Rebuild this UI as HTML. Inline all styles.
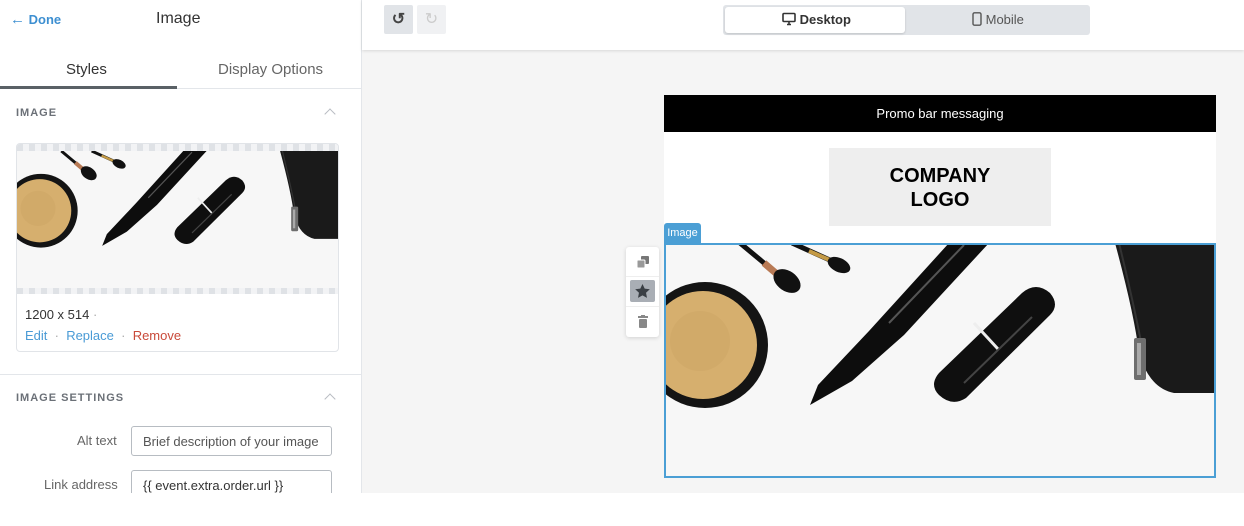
<!DOCTYPE html>
<html><head><meta charset="utf-8"><style>
*{box-sizing:border-box;margin:0;padding:0}
body{width:1244px;height:526px;background:#fff;font-family:"Liberation Sans",sans-serif;position:relative;overflow:hidden}
.abs{position:absolute}
.left{left:0;top:0;width:362px;height:493px;border-right:1px solid #e3e6ea;background:#fff}
.canvas{left:362px;top:50px;width:882px;height:443px;background:#f5f5f5}
.top{left:362px;top:0;width:882px;height:50px;background:#fff;box-shadow:0 1px 3px rgba(0,0,0,.12)}
.lbl{font-size:11px;letter-spacing:1px;color:#6b7077;font-weight:bold}
.chev{width:8px;height:8px;border-left:1.5px solid #b8bcc2;border-top:1.5px solid #b8bcc2;transform:rotate(45deg)}
.inp{border:1px solid #b7bcc2;border-radius:3px;height:30px;font-size:13px;color:#555;padding:7px 11px;background:#fff}
.check{background-image:linear-gradient(90deg,#dfe2e6 50%,#f2f3f5 50%);background-size:12px 100%}
</style></head><body>
<div class="abs left">
  <div class="abs" style="left:10px;top:11px;font-size:13px;color:#3d8fd1;font-weight:bold"><span style="font-size:15px">&#8592;</span> Done</div>
  <div class="abs" style="left:156px;top:10px;font-size:16px;color:#333">Image</div>
  <div class="abs" style="left:66px;top:61px;font-size:15px;color:#333">Styles</div>
  <div class="abs" style="left:218px;top:61px;font-size:15px;color:#666">Display Options</div>
  <div class="abs" style="left:0;top:86px;width:177px;height:3px;background:#5a6166"></div>
  <div class="abs" style="left:177px;top:88px;width:185px;height:1px;background:#e3e6ea"></div>
  <div class="abs lbl" style="left:16px;top:107px">IMAGE</div>
  <div class="abs chev" style="left:326px;top:110px"></div>
  <div class="abs" style="left:16px;top:143px;width:323px;height:209px;border:1px solid #e1e4e8;border-radius:4px;overflow:hidden;background:#fff">
    <div class="abs check" style="left:0;top:0;width:322px;height:7px"></div>
    <div class="abs" style="left:0;top:7px;width:322px;height:137px">
      <svg width="322" height="137" viewBox="0 0 552 234" preserveAspectRatio="none">
<rect width="552" height="234" fill="#f7f7f7"/>
<circle cx="41" cy="102" r="63" fill="#141414"/><circle cx="39" cy="102" r="54" fill="#d6af6e"/><circle cx="36" cy="98" r="30" fill="#c9a060" opacity=".35"/>
<line x1="76" y1="0" x2="112" y2="30" stroke="#111" stroke-width="5"/><line x1="100" y1="20" x2="114" y2="32" stroke="#b87a55" stroke-width="7"/><ellipse cx="123" cy="38" rx="15" ry="10" transform="rotate(35 123 38)" fill="#111"/>
<line x1="128" y1="0" x2="168" y2="18" stroke="#111" stroke-width="5"/><line x1="145" y1="8" x2="168" y2="18" stroke="#c49a45" stroke-width="4"/><ellipse cx="175" cy="22" rx="12" ry="7" transform="rotate(25 175 22)" fill="#111"/>
<path d="M146 162 L154 142 L205 88 L285 0 L325 0 L240 92 L188 138 Z" fill="#0d0d0d"/><path d="M225 80 L300 2" stroke="#555" stroke-width="2"/>
<path d="M275 152 Q265 142 275 130 L358 50 Q372 38 386 50 Q396 62 386 72 L302 155 Q288 164 275 152Z" fill="#0f0f0f"/><line x1="310" y1="80" x2="334" y2="106" stroke="#eee" stroke-width="3"/><path d="M300 140 L368 74" stroke="#444" stroke-width="2"/>
<path d="M451 0 Q470 70 475 110 Q485 145 510 150 L552 150 L552 0Z" fill="#1a1a1a"/><path d="M455 0 Q472 70 480 115" stroke="#333" stroke-width="2" fill="none"/><rect x="470" y="95" width="12" height="42" rx="2" fill="#6e6e6e"/><rect x="473" y="100" width="4" height="32" fill="#aaa"/>
</svg>
    </div>
    <div class="abs check" style="left:0;top:144px;width:322px;height:6px"></div>
    <div class="abs" style="left:8px;top:163px;font-size:13px;color:#333">1200 x 514 <span style="color:#aaa">·</span></div>
    <div class="abs" style="left:8px;top:184px;font-size:13px;color:#4a9bd6">Edit <span style="color:#aaa">&nbsp;·&nbsp;</span> Replace <span style="color:#aaa">&nbsp;·&nbsp;</span> <span style="color:#c94a3a">Remove</span></div>
  </div>
  <div class="abs" style="left:0;top:374px;width:362px;height:1px;background:#e3e6ea"></div>
  <div class="abs lbl" style="left:16px;top:392px">IMAGE SETTINGS</div>
  <div class="abs chev" style="left:326px;top:395px"></div>
  <div class="abs" style="left:77px;top:433px;font-size:13px;color:#666">Alt text</div>
  <div class="abs inp" style="left:131px;top:426px;width:201px">Brief description of your image</div>
  <div class="abs" style="left:44px;top:477px;font-size:13px;color:#666">Link address</div>
  <div class="abs" style="left:131px;top:470px;width:201px;height:23px;overflow:hidden"><div class="inp" style="width:201px;color:#333">{{ event.extra.order.url }}</div></div>
</div>
<div class="abs canvas"></div>
<div class="abs top">
  <div class="abs" style="left:22px;top:5px;width:29px;height:29px;background:#e1e4e8;border-radius:2px;color:#444;font-size:16px;text-align:center;line-height:29px;font-weight:bold">&#8634;</div>
  <div class="abs" style="left:55px;top:5px;width:29px;height:29px;background:#f0f1f3;border-radius:2px;color:#ccc;font-size:16px;text-align:center;line-height:29px">&#8635;</div>
  <div class="abs" style="left:361px;top:5px;width:367px;height:30px;background:#e1e4e8;border-radius:3px"></div>
  <div class="abs" style="left:363px;top:7px;width:180px;height:26px;background:#fff;border-radius:3px;box-shadow:0 1px 2px rgba(0,0,0,.15)"></div>
  <div class="abs" style="left:420px;top:12px;font-size:13px;color:#333;font-weight:bold">
    <svg width="14" height="14" viewBox="0 0 14 14" style="vertical-align:-2px"><rect x="1" y="1.5" width="12" height="8" rx="1" fill="none" stroke="#333" stroke-width="1.6"/><path d="M5 12.5h4M7 10v2.5" stroke="#333" stroke-width="1.6"/></svg> Desktop</div>
  <div class="abs" style="left:610px;top:12px;font-size:13px;color:#555">
    <svg width="10" height="14" viewBox="0 0 10 14" style="vertical-align:-2px"><rect x="1" y="0.8" width="8" height="12.4" rx="1.5" fill="none" stroke="#555" stroke-width="1.4"/></svg> Mobile</div>
</div>
<div class="abs" style="left:664px;top:95px;width:552px;height:37px;background:#000;color:#fff;font-size:13px;text-align:center;line-height:37px">Promo bar messaging</div>
<div class="abs" style="left:664px;top:132px;width:552px;height:112px;background:#fff"></div>
<div class="abs" style="left:829px;top:148px;width:222px;height:78px;background:#eee;text-align:center;font-weight:bold;font-size:20px;line-height:24px;padding-top:16px;color:#000">COMPANY<br>LOGO</div>
<div class="abs" style="left:664px;top:223px;width:37px;height:20px;background:#4b9fd5;border-radius:3px 3px 0 0;color:#fff;font-size:11px;line-height:20px;text-align:center">Image</div>
<div class="abs" style="left:664px;top:243px;width:552px;height:235px;border:2px solid #4b9fd5;overflow:hidden;background:#f7f7f7">
<svg width="548" height="231" viewBox="2 2 548 231" preserveAspectRatio="none">
<rect width="552" height="234" fill="#f7f7f7"/>
<circle cx="41" cy="102" r="63" fill="#141414"/><circle cx="39" cy="102" r="54" fill="#d6af6e"/><circle cx="36" cy="98" r="30" fill="#c9a060" opacity=".35"/>
<line x1="76" y1="0" x2="112" y2="30" stroke="#111" stroke-width="5"/><line x1="100" y1="20" x2="114" y2="32" stroke="#b87a55" stroke-width="7"/><ellipse cx="123" cy="38" rx="15" ry="10" transform="rotate(35 123 38)" fill="#111"/>
<line x1="128" y1="0" x2="168" y2="18" stroke="#111" stroke-width="5"/><line x1="145" y1="8" x2="168" y2="18" stroke="#c49a45" stroke-width="4"/><ellipse cx="175" cy="22" rx="12" ry="7" transform="rotate(25 175 22)" fill="#111"/>
<path d="M146 162 L154 142 L205 88 L285 0 L325 0 L240 92 L188 138 Z" fill="#0d0d0d"/><path d="M225 80 L300 2" stroke="#555" stroke-width="2"/>
<path d="M275 152 Q265 142 275 130 L358 50 Q372 38 386 50 Q396 62 386 72 L302 155 Q288 164 275 152Z" fill="#0f0f0f"/><line x1="310" y1="80" x2="334" y2="106" stroke="#eee" stroke-width="3"/><path d="M300 140 L368 74" stroke="#444" stroke-width="2"/>
<path d="M451 0 Q470 70 475 110 Q485 145 510 150 L552 150 L552 0Z" fill="#1a1a1a"/><path d="M455 0 Q472 70 480 115" stroke="#333" stroke-width="2" fill="none"/><rect x="470" y="95" width="12" height="42" rx="2" fill="#6e6e6e"/><rect x="473" y="100" width="4" height="32" fill="#aaa"/>
</svg></div>
<div class="abs" style="left:626px;top:247px;width:33px;height:90px;background:#fff;border-radius:3px;box-shadow:0 1px 4px rgba(0,0,0,.15)">
  <svg class="abs" style="left:11px;top:9px" width="12" height="12" viewBox="0 0 12 12"><rect x="4" y="0" width="8" height="8" rx="1" fill="#777"/><rect x="0" y="4" width="8" height="8" rx="1" fill="#999" stroke="#fff" stroke-width="1"/></svg>
  <div class="abs" style="left:0;top:29px;width:33px;height:1px;background:#eee"></div>
  <div class="abs" style="left:4px;top:33px;width:25px;height:22px;background:#a9aeb5;border-radius:2px"></div>
  <svg class="abs" style="left:9px;top:37px" width="15" height="14" viewBox="0 0 24 23"><path d="M12 0l3.6 7.6 8.4 1-6.2 5.8 1.6 8.4L12 18.6 4.6 22.8l1.6-8.4L0 8.6l8.4-1z" fill="#3a3f45"/></svg>
  <div class="abs" style="left:0;top:59px;width:33px;height:1px;background:#eee"></div>
  <svg class="abs" style="left:12px;top:68px" width="10" height="13" viewBox="0 0 10 13"><rect x="0" y="1" width="10" height="2" fill="#888"/><rect x="3" y="0" width="4" height="2" fill="#888"/><rect x="1" y="4" width="8" height="9" rx="1" fill="#888"/></svg>
</div>
</body></html>
